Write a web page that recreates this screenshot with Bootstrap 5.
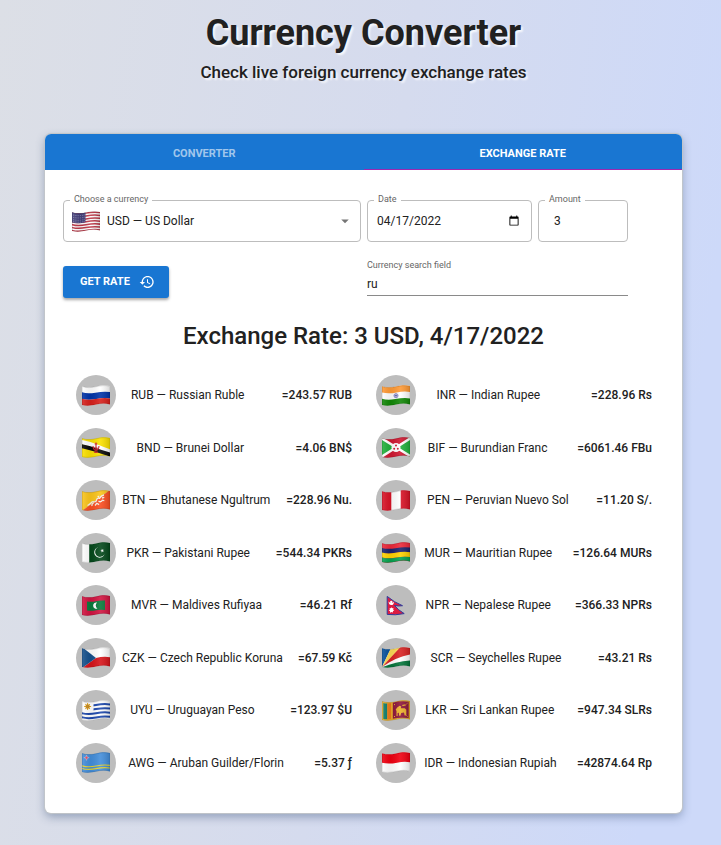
<!DOCTYPE html>
<html lang="en">
<head>
<meta charset="utf-8">
<meta name="viewport" content="width=device-width, initial-scale=1">
<title>Currency Converter</title>
<link href="https://cdn.jsdelivr.net/npm/bootstrap@5.3.0/dist/css/bootstrap.min.css" rel="stylesheet">
<style>
  body { font-family: Roboto, sans-serif; font-size: 12px; color: #212121; min-height: 100vh; background: linear-gradient(98deg, #dcdfe6 0%, #d5dbee 50%, #cdd9f9 90%); }
  .page { padding: 9px 39px 32px 45px; }
  .page-head { text-shadow: 2px 2px 2px rgba(255, 255, 255, .8); }
  .page-title { font-size: 36px; line-height: 48px; font-weight: 700; }
  .page-lead { font-size: 17px; line-height: 30px; font-weight: 500; }
  .panel { margin-top: 47px; border-radius: 6px; background: #fff; overflow: hidden; box-shadow: 0 0 1px 1px #c3c6c9, 0 4px 10px rgba(60, 85, 125, .45); padding-bottom: 30px; }
  .tabs { background: #1976d2; }
  .tab-btn { height: 36px; padding: 4px 0 0; border: 0; background: none; color: rgba(255, 255, 255, .6); font-size: 11px; font-weight: 700; }
  .tab-btn.active { color: #fff; box-shadow: inset 0 -1px #9c27b0; }
  .rate-form { display: grid; grid-template-columns: 298fr 165fr 90fr; gap: 24px 6px; padding: 30px 54px 0 18px; }
  .field { position: relative; height: 42px; border: 1px solid #bdbdbd; border-radius: 4px; }
  .field label { position: absolute; top: -10px; left: 6px; padding: 0 4px; line-height: 16px; background: #fff; }
  label { font-size: 9px; color: #666; }
  .field select, .field input, .search-box input { width: 100%; height: 100%; border: 0; outline: 0; background: none; color: #212121; font-size: 12px; appearance: none; }
  .field select { padding: 0 30px 0 43px; }
  .field input { padding: 0 9px; }
  .field input[type=number] { padding-left: 15px; appearance: textfield; }
  .field input::-webkit-calendar-picker-indicator { width: 12px; height: 12px; }
  .field .flag { position: absolute; top: 10px; left: 8px; pointer-events: none; }
  .field .caret { position: absolute; top: 11px; right: 6px; pointer-events: none; }
  .flag { width: 28px; height: 21px; display: block; }
  .btn-rate { --bs-btn-bg: #1976d2; --bs-btn-border-color: #1976d2; --bs-btn-color: #fff; --bs-btn-hover-bg: #1565c0; --bs-btn-hover-color: #fff; height: 32px; padding: 0 14px 0 17px; gap: 9px; font-size: 11px; font-weight: 700; border: 0; border-radius: 3px; box-shadow: 0 2px 3px rgba(0, 0, 0, .35); }
  .search-box { grid-column: 2 / 4; height: 30px; border-bottom: 1px solid #8a8a8a; }
  .search-box label { line-height: 10px; margin-top: -6px; }
  .search-box input { padding: 2px 0 0; }
  .rate-title { font-size: 24px; line-height: 32px; font-weight: 500; margin: 22px 0 23px; }
  .rates { display: grid; grid-template-columns: 1fr 1fr; column-gap: 24px; padding: 0 30px 0 31px; }
  .rates ul { min-height: 408px; }
  .avatar { width: 40px; height: 40px; background: #bdbdbd; }
  .cur-name { font-weight: 400; }
  .cur-name::before { content: ""; flex-grow: 2; }
  .cur-name::after { content: ""; flex-grow: 5; }
  .cur-value { font-weight: 500; }
</style>
<script src="https://cdn.jsdelivr.net/npm/bootstrap@5.3.0/dist/js/bootstrap.bundle.min.js"></script>
</head>
<body>
<svg width="0" height="0" class="position-absolute" aria-hidden="true">
  <defs>
    <clipPath id="cut"><path d="M0 1.2C5 3 9 2.4 14 1.4S23 -.2 28 1V19.6C23 18 19 18.6 14 19.6S5 21.2 0 20Z"/></clipPath>
    <linearGradient id="sheen"><stop offset="0" stop-color="#fff" stop-opacity=".12"/><stop offset=".3" stop-opacity=".06"/><stop offset=".65" stop-color="#fff" stop-opacity=".1"/><stop offset="1" stop-opacity=".15"/></linearGradient>
    <path id="wv" d="M-1 0C5 2 9 1.4 14 .4S23 -1.2 29 0" fill="none"/>
    <path id="edge" d="M.3 1.5C5 3.2 9 2.7 14 1.7S23 .1 27.7 1.3V19.2C23 17.7 19 18.3 14 19.3S5 20.9 .3 19.7Z" fill="url(#sheen)" stroke="#000" stroke-opacity=".2" stroke-width=".6"/>
    <symbol id="us" viewBox="0 0 28 21"><g clip-path="url(#cut)"><path fill="#fff" d="M0 0h28v21H0z"/><g stroke="#bd3646" stroke-width="1.5"><use href="#wv" y="1.7"/><use href="#wv" y="4.6"/><use href="#wv" y="7.5"/><use href="#wv" y="10.4"/><use href="#wv" y="13.3"/><use href="#wv" y="16.2"/><use href="#wv" y="19.1"/></g><path fill="#443f7a" d="M0 0h13.5v11.2Q7 13 0 11.6z"/><path d="M1 4q6 1.5 12-.3M1 6.3q6 1.5 12-.3M1 8.6q6 1.5 12-.3M1 10.5q6 1.5 12-.3" fill="none" stroke="#b9b8d6" stroke-width=".7" stroke-dasharray=".8 1"/></g><use href="#edge"/></symbol>
    <symbol id="ru" viewBox="0 0 28 21"><g clip-path="url(#cut)"><path fill="#fff" d="M0 0h28v21H0z"/><use href="#wv" y="10.4" stroke="#0033a8" stroke-width="6.4"/><use href="#wv" y="17.1" stroke="#d8201b" stroke-width="7"/></g><use href="#edge"/></symbol>
    <symbol id="in" viewBox="0 0 28 21"><g clip-path="url(#cut)"><path fill="#fff" d="M0 0h28v21H0z"/><use href="#wv" y="3.8" stroke="#ff9a35" stroke-width="6.6"/><use href="#wv" y="17.1" stroke="#128807" stroke-width="7"/><circle cx="14" cy="10.7" r="2.1" fill="#dcdcf2" stroke="#3c3c9c" stroke-width=".5"/><path d="M14 8.7v4M12 10.7h4" stroke="#24248c" stroke-width=".3"/><circle cx="14" cy="10.700" r=".6" fill="#24248c"/></g><use href="#edge"/></symbol>
    <symbol id="bn" viewBox="0 0 28 21"><g clip-path="url(#cut)"><path fill="#fbe100" d="M0 0h28v21H0z"/><path d="M-1 5Q7 6.500 14 9.400T29 15" fill="none" stroke="#fff" stroke-width="4.400"/><path d="M-1 9Q7 10.500 14 13T29 17.800" fill="none" stroke="#080808" stroke-width="3.800"/><path d="M14 5.500v9M11 9q.2 4.200 3 4.200T17 9M12 15q2 .8 4 0M12.700 7h2.600" fill="none" stroke="#d01b25" stroke-width="1.100"/><path d="M12.500 11h3" stroke="#d01b25" stroke-width="1.200"/></g><use href="#edge"/></symbol>
    <symbol id="bi" viewBox="0 0 28 21"><g clip-path="url(#cut)"><path fill="#cf1831" d="M0 0h28v21H0z"/><path fill="#21b13b" d="M0 1l14 9.5L0 20zM28 0L14 10.5 28 20z"/><path d="M0 1.5L28 19M28 1.5L0 19.5" stroke="#fff" stroke-width="2.4"/><circle cx="14" cy="10.5" r="4.5" fill="#fff"/><g fill="#cf1831"><circle cx="14" cy="8.500" r="1"/><circle cx="12.2" cy="11.800" r="1"/><circle cx="15.800" cy="11.800" r="1"/></g></g><use href="#edge"/></symbol>
    <symbol id="bt" viewBox="0 0 28 21"><g clip-path="url(#cut)"><path fill="#fbc51b" d="M0 0h28L0 21z"/><path fill="#fb4e20" d="M28 0v21H0z"/><path d="M5.500 15.500q2-1 3.500-2.500 1-2 3-1.200 2 .3 2.500-1.300.2-2.700 3-2.200 1.600-2.600 4.500-3.300M10 16q-.5-2 1.700-3.200M13 15.500l1.800-2.200 2.300 1.300M16.500 11q2.500 1.800 3.800-.8l2 .4M17 7.300l-1.300-1.200M20 8l2.300-.6" fill="none" stroke="#f7f0e6" stroke-width="1.300"/></g><use href="#edge"/></symbol>
    <symbol id="pe" viewBox="0 0 28 21"><g clip-path="url(#cut)"><path fill="#fff" d="M0 0h28v21H0z"/><path fill="#d91326" d="M0 0h9.3v21H0zM18.7 0H28v21h-9.3z"/></g><use href="#edge"/></symbol>
    <symbol id="pk" viewBox="0 0 28 21"><g clip-path="url(#cut)"><path fill="#fff" d="M0 0h28v21H0z"/><path fill="#04491b" d="M7.2 0H28v21H7.2z"/><path fill="#fff" d="M16.3 5.2a5.3 5.3 0 1 0 6.2 7A5 5 0 1 1 16.3 5.2zM19.9 6.7l.6 1.1 1.3-.1-.7 1.1.6 1.1-1.2-.3-.9.9v-1.3l-1.2-.5 1.2-.5z"/></g><use href="#edge"/></symbol>
    <symbol id="mu" viewBox="0 0 28 21"><g clip-path="url(#cut)"><path fill="#ed2839" d="M0 0h28v21H0z"/><use href="#wv" y="8.1" stroke="#1b236d" stroke-width="4.8"/><use href="#wv" y="12.8" stroke="#ffd300" stroke-width="4.8"/><use href="#wv" y="18" stroke="#06a350" stroke-width="5.6"/></g><use href="#edge"/></symbol>
    <symbol id="mv" viewBox="0 0 28 21"><g clip-path="url(#cut)"><path fill="#d21441" d="M0 0h28v21H0z"/><path fill="#087b3b" d="M5 6.4q5 .8 9-.2t9-.7v9.4q-5-.6-9 .4t-9 .2z"/><path fill="#fff" d="M15.200 7.600a3.100 3.100 0 1 0 .2 5.800 3.500 3.500 0 0 1-.2-5.800z"/></g><use href="#edge"/></symbol>
    <symbol id="np" viewBox="0 0 28 21"><path d="M5.2 1.4Q12 7.2 20.5 10.7 16 11.4 12.5 10.5 16 15 22.2 18.6 13 20.5 5.2 19.4z" fill="#dc1c42" stroke="#2f3c9c" stroke-width="1"/><path d="M6.600 6.500q2.700 3 5.400.2-.2 3.400-2.700 3.400T6.600 6.500z" fill="#fff"/><circle cx="9.300" cy="7" r="1.200" fill="#fff"/><path d="M9.2 12l.8 1.3 1.5-.3-.4 1.500 1.200.9-1.400.7.100 1.500-1.500-.6-1.400.700-.1-1.600-1.300-.7 1.200-1-.3-1.500 1.400.4z" fill="#fff"/></symbol>
    <symbol id="cz" viewBox="0 0 28 21"><g clip-path="url(#cut)"><path fill="#fff" d="M0 0h28v21H0z"/><path fill="#d7141a" d="M0 21L14 11q7-1.800 14-.8V21z"/><path fill="#15508c" d="M0 0l14 11L0 21z"/></g><use href="#edge"/></symbol>
    <symbol id="sc" viewBox="0 0 28 21"><g clip-path="url(#cut)"><path fill="#fff" d="M0 0h28v21H0z"/><path fill="#06519c" d="M0 20V0h9.500z"/><path fill="#fcd955" d="M0 20L9.500 0H19z"/><path fill="#d92323" d="M0 20L18.500 0H28v7.500Q14 10 0 20z"/><path fill="#05753b" d="M0 20.200Q14 14.500 28 13.500V21H0z"/></g><use href="#edge"/></symbol>
    <symbol id="uy" viewBox="0 0 28 21"><g clip-path="url(#cut)"><path fill="#fff" d="M0 0h28v21H0z"/><g stroke="#1c47ac" stroke-width="2"><use href="#wv" y="4.600"/><use href="#wv" y="8.700"/><use href="#wv" y="12.900"/><use href="#wv" y="17"/></g><path fill="#fff" d="M0 0h11.500v10.800Q6 12.300 0 11.500z"/><path d="M5.600 3v7M2.100 6.500h7M3.200 4.100l4.800 4.800M8 4.100L3.200 8.900" stroke="#e8a713" stroke-width="1"/><circle cx="5.600" cy="6.500" r="2.200" fill="#c98b19"/></g><use href="#edge"/></symbol>
    <symbol id="lk" viewBox="0 0 28 21"><g clip-path="url(#cut)"><path fill="#edb12a" d="M0 0h28v21H0z"/><path fill="#0b7c6c" d="M1.300 3q2 .6 4 .5v15.800q-2 .1-4-.4z"/><path fill="#ef7a1a" d="M5.300 3.500q2 0 3.800-.4V19q-1.800.4-3.800.4z"/><path fill="#8d153a" d="M10.800 2.800q8-2.300 15.900-1v16.300q-8-1.100-15.900.7z"/><path fill="#edb12a" d="M14.500 16v-5l-.8-1.500 1.500-2 2.500-1.800 1.500.8-.4 1.700h4l1.500 1.500v5.800h-1.700l-.6-3-2.800.5-.8 2.800h-1.200l-.4-3-1.200.2v3zM20 5l3.500-.8.4 1.300-3.200.6z"/><path d="M12 4.200l1 .8M25.500 3.200l-1 .8M12 17l1-1M25.500 16.500l-1-1" stroke="#edb12a"/></g><use href="#edge"/></symbol>
    <symbol id="aw" viewBox="0 0 28 21"><g clip-path="url(#cut)"><path fill="#438edb" d="M0 0h28v21H0z"/><g stroke="#e8d32c" stroke-width="1.100"><use href="#wv" y="13.600"/><use href="#wv" y="16.200"/></g><path fill="#e94962" stroke="#fff" stroke-width=".3" d="M4.500 3l.7 2 2 .7-2 .7-.7 2-.7-2-2-.7 2-.7z"/></g><use href="#edge"/></symbol>
    <symbol id="id" viewBox="0 0 28 21"><g clip-path="url(#cut)"><path fill="#fff" d="M0 0h28v21H0z"/><use href="#wv" y="5" stroke="#f00010" stroke-width="10.800"/></g><use href="#edge"/></symbol>
  </defs>
</svg>

<main class="page">
  <header class="page-head text-center">
    <h1 class="page-title mb-0">Currency Converter</h1>
    <p class="page-lead mb-0">Check live foreign currency exchange rates</p>
  </header>

  <section class="panel">
    <div class="tabs d-flex" role="tablist">
      <button type="button" class="tab-btn flex-fill w-50 text-uppercase" role="tab" aria-selected="false">Converter</button>
      <button type="button" class="tab-btn active flex-fill w-50 text-uppercase" role="tab" aria-selected="true">Exchange rate</button>
    </div>

    <form class="rate-form">
      <div class="field">
        <label for="currency">Choose a currency</label>
        <svg class="flag"><use href="#us"/></svg>
        <select id="currency"><option>USD — US Dollar</option></select>
        <svg class="caret" width="18" height="18" viewBox="0 0 24 24" fill="#757575"><path d="M7 10l5 5 5-5z"/></svg>
      </div>
      <div class="field">
        <label for="date">Date</label>
        <input type="date" id="date" value="2022-04-17">
      </div>
      <div class="field">
        <label for="amount">Amount</label>
        <input type="number" id="amount" value="3">
      </div>
      <div>
        <button type="button" class="btn btn-rate d-inline-flex align-items-center text-uppercase">Get rate
          <svg width="16" height="16" viewBox="0 0 24 24" fill="currentColor"><path d="M13 3c-4.970 0-9 4.030-9 9H1l3.890 3.890.070.140L9 12H6c0-3.870 3.130-7 7-7s7 3.130 7 7-3.130 7-7 7c-1.930 0-3.680-.790-4.940-2.060l-1.420 1.420C8.270 19.990 10.510 21 13 21c4.970 0 9-4.030 9-9s-4.030-9-9-9zm-1 5v5l4.280 2.540.720-1.210-3.500-2.080V8H12z"/></svg>
        </button>
      </div>
      <div class="search-box d-flex flex-column">
        <label for="search">Currency search field</label>
        <input type="text" id="search" value="ru">
      </div>
    </form>

    <h2 class="rate-title text-center">Exchange Rate: 3 USD, 4/17/2022</h2>

    <div class="rates">
      <ul class="list-unstyled d-flex flex-column justify-content-between mb-0">
        <li class="d-flex align-items-center"><span class="avatar rounded-circle d-flex align-items-center justify-content-center"><svg class="flag"><use href="#ru"/></svg></span><span class="cur-name d-flex flex-fill text-nowrap">RUB — Russian Ruble</span><span class="cur-value text-nowrap">=243.57 RUB</span></li>
        <li class="d-flex align-items-center"><span class="avatar rounded-circle d-flex align-items-center justify-content-center"><svg class="flag"><use href="#bn"/></svg></span><span class="cur-name d-flex flex-fill text-nowrap">BND — Brunei Dollar</span><span class="cur-value text-nowrap">=4.06 BN$</span></li>
        <li class="d-flex align-items-center"><span class="avatar rounded-circle d-flex align-items-center justify-content-center"><svg class="flag"><use href="#bt"/></svg></span><span class="cur-name d-flex flex-fill text-nowrap">BTN — Bhutanese Ngultrum</span><span class="cur-value text-nowrap">=228.96 Nu.</span></li>
        <li class="d-flex align-items-center"><span class="avatar rounded-circle d-flex align-items-center justify-content-center"><svg class="flag"><use href="#pk"/></svg></span><span class="cur-name d-flex flex-fill text-nowrap">PKR — Pakistani Rupee</span><span class="cur-value text-nowrap">=544.34 PKRs</span></li>
        <li class="d-flex align-items-center"><span class="avatar rounded-circle d-flex align-items-center justify-content-center"><svg class="flag"><use href="#mv"/></svg></span><span class="cur-name d-flex flex-fill text-nowrap">MVR — Maldives Rufiyaa</span><span class="cur-value text-nowrap">=46.21 Rf</span></li>
        <li class="d-flex align-items-center"><span class="avatar rounded-circle d-flex align-items-center justify-content-center"><svg class="flag"><use href="#cz"/></svg></span><span class="cur-name d-flex flex-fill text-nowrap">CZK — Czech Republic Koruna</span><span class="cur-value text-nowrap">=67.59 Kč</span></li>
        <li class="d-flex align-items-center"><span class="avatar rounded-circle d-flex align-items-center justify-content-center"><svg class="flag"><use href="#uy"/></svg></span><span class="cur-name d-flex flex-fill text-nowrap">UYU — Uruguayan Peso</span><span class="cur-value text-nowrap">=123.97 $U</span></li>
        <li class="d-flex align-items-center"><span class="avatar rounded-circle d-flex align-items-center justify-content-center"><svg class="flag"><use href="#aw"/></svg></span><span class="cur-name d-flex flex-fill text-nowrap">AWG — Aruban Guilder/Florin</span><span class="cur-value text-nowrap">=5.37 ƒ</span></li>
      </ul>
      <ul class="list-unstyled d-flex flex-column justify-content-between mb-0">
        <li class="d-flex align-items-center"><span class="avatar rounded-circle d-flex align-items-center justify-content-center"><svg class="flag"><use href="#in"/></svg></span><span class="cur-name d-flex flex-fill text-nowrap">INR — Indian Rupee</span><span class="cur-value text-nowrap">=228.96 Rs</span></li>
        <li class="d-flex align-items-center"><span class="avatar rounded-circle d-flex align-items-center justify-content-center"><svg class="flag"><use href="#bi"/></svg></span><span class="cur-name d-flex flex-fill text-nowrap">BIF — Burundian Franc</span><span class="cur-value text-nowrap">=6061.46 FBu</span></li>
        <li class="d-flex align-items-center"><span class="avatar rounded-circle d-flex align-items-center justify-content-center"><svg class="flag"><use href="#pe"/></svg></span><span class="cur-name d-flex flex-fill text-nowrap">PEN — Peruvian Nuevo Sol</span><span class="cur-value text-nowrap">=11.20 S/.</span></li>
        <li class="d-flex align-items-center"><span class="avatar rounded-circle d-flex align-items-center justify-content-center"><svg class="flag"><use href="#mu"/></svg></span><span class="cur-name d-flex flex-fill text-nowrap">MUR — Mauritian Rupee</span><span class="cur-value text-nowrap">=126.64 MURs</span></li>
        <li class="d-flex align-items-center"><span class="avatar rounded-circle d-flex align-items-center justify-content-center"><svg class="flag"><use href="#np"/></svg></span><span class="cur-name d-flex flex-fill text-nowrap">NPR — Nepalese Rupee</span><span class="cur-value text-nowrap">=366.33 NPRs</span></li>
        <li class="d-flex align-items-center"><span class="avatar rounded-circle d-flex align-items-center justify-content-center"><svg class="flag"><use href="#sc"/></svg></span><span class="cur-name d-flex flex-fill text-nowrap">SCR — Seychelles Rupee</span><span class="cur-value text-nowrap">=43.21 Rs</span></li>
        <li class="d-flex align-items-center"><span class="avatar rounded-circle d-flex align-items-center justify-content-center"><svg class="flag"><use href="#lk"/></svg></span><span class="cur-name d-flex flex-fill text-nowrap">LKR — Sri Lankan Rupee</span><span class="cur-value text-nowrap">=947.34 SLRs</span></li>
        <li class="d-flex align-items-center"><span class="avatar rounded-circle d-flex align-items-center justify-content-center"><svg class="flag"><use href="#id"/></svg></span><span class="cur-name d-flex flex-fill text-nowrap">IDR — Indonesian Rupiah</span><span class="cur-value text-nowrap">=42874.64 Rp</span></li>
      </ul>
    </div>
  </section>
</main>
</body>
</html>
